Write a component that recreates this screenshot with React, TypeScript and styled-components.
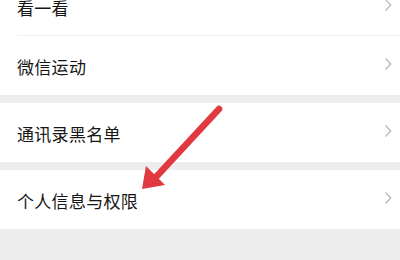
import React from "react";
import styled, { createGlobalStyle } from "styled-components";

const GlobalStyle = createGlobalStyle`
  html, body {
    margin: 0;
    padding: 0;
    background: #ededed;
    overflow: hidden;
  }
  body {
    font-family: "Noto Sans CJK SC", "Noto Sans", sans-serif;
  }
`;

const Page = styled.main`
  position: relative;
  width: 400px;
  height: 260px;
  overflow: hidden;
  background: #ededed;
`;

const Stack = styled.div`
  display: flex;
  flex-direction: column;
  gap: 8px;
  margin-top: -23px;
`;

const Group = styled.section`
  background: #fff;
  display: flex;
  flex-direction: column;
`;

const Row = styled.div<{ $divider?: boolean }>`
  height: 59px;
  display: flex;
  align-items: center;
  justify-content: space-between;
  padding: 0 8px 0 17px;
  box-sizing: border-box;
  position: relative;

  ${(p) =>
    p.$divider &&
    `
    &::after {
      content: "";
      position: absolute;
      left: 17px;
      right: 0;
      bottom: 0;
      height: 1px;
      background: #f0f0f0;
    }
  `}
`;

const Label = styled.span`
  font-size: 17px;
  color: #161616;
  letter-spacing: 0.3px;
  line-height: 1;
  padding-top: 2px;
`;

const ChevronIcon = styled.svg`
  margin-bottom: 3px;
`;

const Chevron = () => (
  <ChevronIcon width="8" height="14" viewBox="0 0 8 14">
    <path d="M1.5 1.5 L6.8 7 L1.5 12.5" fill="none" stroke="#b5b5b5" strokeWidth="1.2" />
  </ChevronIcon>
);

const ArrowLayer = styled.svg`
  position: absolute;
  left: 0;
  top: 0;
  pointer-events: none;
`;

const Arrow = () => (
  <ArrowLayer width="400" height="260" viewBox="0 0 400 260">
    <line x1="219" y1="109" x2="156" y2="177" stroke="#e0393f" strokeWidth="6.5" strokeLinecap="round" />
    <polygon points="142,189 146,166 165,185" fill="#e0393f" />
  </ArrowLayer>
);

const groups: { label: string }[][] = [
  [{ label: "看一看" }, { label: "微信运动" }],
  [{ label: "通讯录黑名单" }],
  [{ label: "个人信息与权限" }],
];

export default function App() {
  return (
    <Page>
      <GlobalStyle />
      <Stack>
        {groups.map((items, gi) => (
          <Group key={gi}>
            {items.map((item, i) => (
              <Row key={item.label} $divider={i < items.length - 1}>
                <Label>{item.label}</Label>
                <Chevron />
              </Row>
            ))}
          </Group>
        ))}
      </Stack>
      <Arrow />
    </Page>
  );
}
